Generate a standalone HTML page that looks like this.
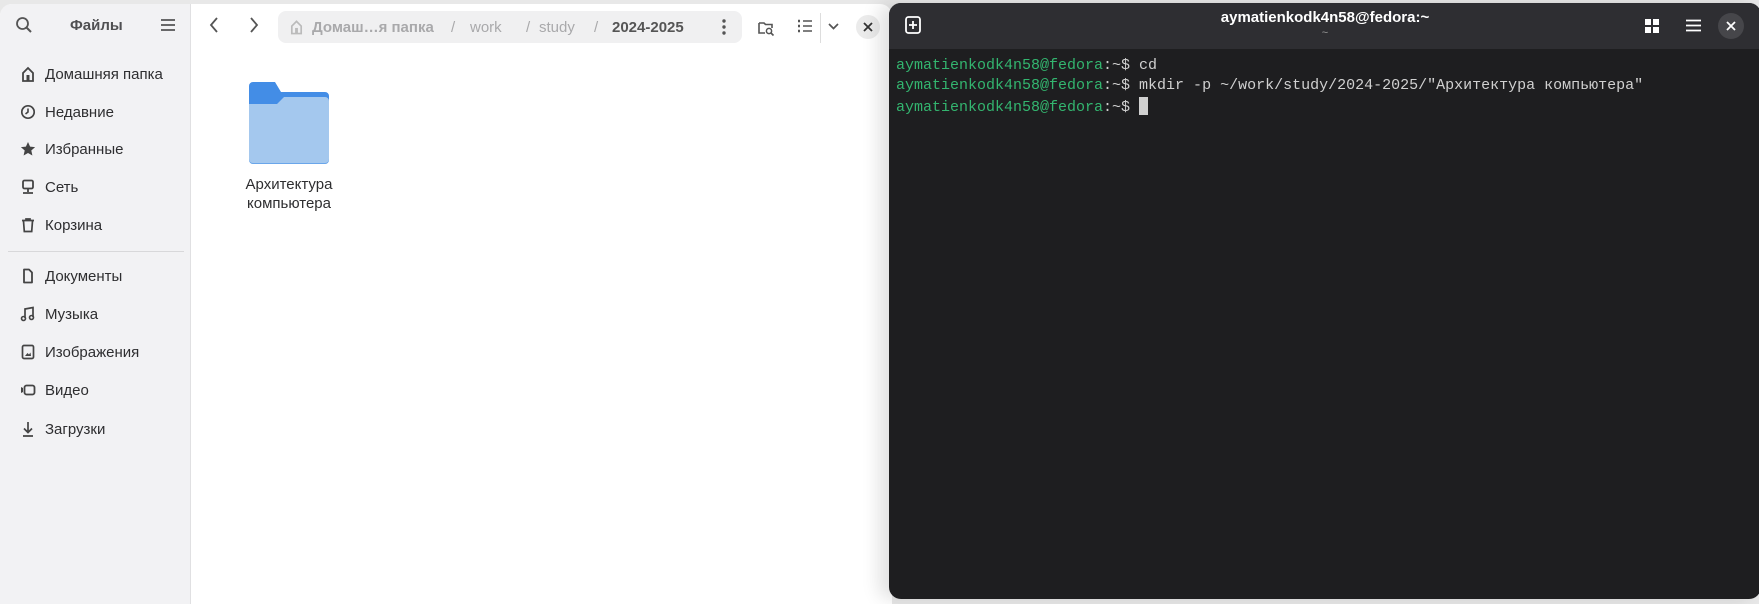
<!DOCTYPE html>
<html><head><meta charset="utf-8"><style>
*{margin:0;padding:0;box-sizing:border-box}
body{width:1759px;height:599px;overflow:hidden;background:#e8e8e8;font-family:"Liberation Sans","Noto Sans CJK SC",sans-serif;position:relative}
.files{position:absolute;left:0;top:4px;width:892px;height:600px;background:#fff;border-radius:12px 12px 0 0;overflow:hidden}
.side{position:absolute;left:0;top:0;width:191px;height:100%;background:#f2f2f4;border-right:1px solid #e0e0e2}
.item{position:absolute;left:0;height:24px;display:flex;align-items:center;font-size:15px;color:#2e2e30}
.item svg{position:absolute;left:20px}
.item span{position:absolute;left:45px;white-space:nowrap}
.sep{position:absolute;left:8px;width:176px;top:247px;border-top:1px solid #d8d8da}
.path{position:absolute;left:278px;top:7px;width:464px;height:32px;background:#f0f0f1;border-radius:8px;font-size:15px;color:#a9a9ab}
.path span{position:absolute;top:8px;white-space:nowrap}
.term{position:absolute;left:889px;top:3px;width:872px;height:596px;background:#1e1e20;border-radius:12px;overflow:hidden;box-shadow:-10px 0 18px rgba(0,0,0,.12)}
.th{position:absolute;left:0;top:0;width:100%;height:46px;background:#2e2e32}
.tl{position:absolute;left:7px;font-family:"Liberation Mono",monospace;font-size:15px;color:#d0d0d0;white-space:pre}
.g{color:#33b56f}
</style></head><body>
<div class="files">
 <div class="side">
  <svg style="position:absolute;left:15px;top:12px" width="18" height="18" viewBox="0 0 18 18"><circle cx="7.5" cy="7.5" r="5.5" fill="none" stroke="#555" stroke-width="1.8"/><path d="M11.5 11.5L16 16" stroke="#555" stroke-width="2"/></svg>
  <div style="position:absolute;left:70px;top:13px;font-size:15px;font-weight:bold;color:#505052">Файлы</div>
  <svg style="position:absolute;left:160px;top:14px" width="16" height="14"><path d="M1 2h14M1 7h14M1 12h14" stroke="#555" stroke-width="1.8"/></svg>
  <div class="item" style="top:58px"><svg width="16" height="16" viewBox="0 0 16 16"><path d="M3 15V7l5-5 5 5v8z" fill="none" stroke="#444" stroke-width="1.8"/><rect x="6.5" y="9" width="3" height="6" fill="#444"/></svg><span>Домашняя папка</span></div>
  <div class="item" style="top:96px"><svg width="16" height="16" viewBox="0 0 16 16"><circle cx="8" cy="8" r="6.2" fill="none" stroke="#444" stroke-width="1.7"/><path d="M8 4.5V8l-2.5 2" fill="none" stroke="#444" stroke-width="1.6"/></svg><span>Недавние</span></div>
  <div class="item" style="top:133px"><svg width="16" height="16" viewBox="0 0 16 16"><path d="M8 1l2.1 4.6 5 .5-3.8 3.4 1.1 5L8 12l-4.4 2.5 1.1-5L.9 6.1l5-.5z" fill="#444"/></svg><span>Избранные</span></div>
  <div class="item" style="top:171px"><svg width="16" height="16" viewBox="0 0 16 16"><rect x="3" y="1.5" width="10" height="8" rx="1.5" fill="none" stroke="#444" stroke-width="1.8"/><path d="M8 10v3M3 14h10" stroke="#444" stroke-width="1.8"/></svg><span>Сеть</span></div>
  <div class="item" style="top:209px"><svg width="16" height="16" viewBox="0 0 16 16"><path d="M2 3.5h12M6 3.5V2h4v1.5M3.5 4l.8 10.5h7.4L12.5 4" fill="none" stroke="#444" stroke-width="1.7"/></svg><span>Корзина</span></div>
  <div class="sep"></div>
  <div class="item" style="top:260px"><svg width="16" height="16" viewBox="0 0 16 16"><path d="M4 1.5h5l3 3V14.5H4z" fill="none" stroke="#444" stroke-width="1.8" stroke-linejoin="round"/></svg><span>Документы</span></div>
  <div class="item" style="top:298px"><svg width="16" height="16" viewBox="0 0 16 16"><path d="M5 12V3l8-1.5V11" fill="none" stroke="#444" stroke-width="1.7"/><circle cx="3.5" cy="12.5" r="2" fill="none" stroke="#444" stroke-width="1.6"/><circle cx="11.5" cy="11.5" r="2" fill="none" stroke="#444" stroke-width="1.6"/></svg><span>Музыка</span></div>
  <div class="item" style="top:336px"><svg width="16" height="16" viewBox="0 0 16 16"><rect x="2.5" y="1.5" width="11" height="13" rx="1.5" fill="none" stroke="#444" stroke-width="1.7"/><path d="M5 12l2.5-3 1.5 1.5 1.5-2L11 12z" fill="#444"/></svg><span>Изображения</span></div>
  <div class="item" style="top:374px"><svg width="16" height="16" viewBox="0 0 16 16"><path d="M1 5l2 1v4l-2 1z" fill="#444"/><rect x="4.5" y="3.5" width="10" height="9" rx="2" fill="none" stroke="#444" stroke-width="1.8"/></svg><span>Видео</span></div>
  <div class="item" style="top:413px"><svg width="16" height="16" viewBox="0 0 16 16"><path d="M8 1v10M4 7.5l4 4 4-4M3 15h10" fill="none" stroke="#444" stroke-width="1.7"/></svg><span>Загрузки</span></div>
 </div>
 <svg style="position:absolute;left:208px;top:12px" width="12" height="18"><path d="M9 2L3 9l6 7" fill="none" stroke="#555" stroke-width="1.8"/></svg>
 <svg style="position:absolute;left:248px;top:12px" width="12" height="18"><path d="M3 2l6 7-6 7" fill="none" stroke="#555" stroke-width="1.8"/></svg>
 <div class="path">
  <svg style="position:absolute;left:11px;top:8px" width="15" height="16" viewBox="0 0 16 16"><path d="M3 15V7l5-5 5 5v8z" fill="none" stroke="#bbb" stroke-width="1.8"/><rect x="6.5" y="9" width="3" height="6" fill="#bbb"/></svg>
  <span style="left:34px;font-weight:bold">Домаш…я папка</span>
  <span style="left:173px">/</span>
  <span style="left:192px">work</span>
  <span style="left:248px">/</span>
  <span style="left:261px">study</span>
  <span style="left:316px">/</span>
  <span style="left:334px;color:#555;font-weight:bold">2024-2025</span>
  <svg style="position:absolute;left:443px;top:8px" width="6" height="18"><circle cx="3" cy="2" r="1.7" fill="#555"/><circle cx="3" cy="8" r="1.7" fill="#555"/><circle cx="3" cy="14" r="1.7" fill="#555"/></svg>
 </div>
 <svg style="position:absolute;left:757px;top:15px" width="18" height="18" viewBox="0 0 18 18"><path d="M2 4h5l1.5 1.5H15V9M2 4v10h6" fill="none" stroke="#555" stroke-width="1.6"/><circle cx="12" cy="12" r="2.6" fill="none" stroke="#555" stroke-width="1.5"/><path d="M14 14l2.5 2.5" stroke="#555" stroke-width="1.6"/></svg>
 <svg style="position:absolute;left:797px;top:15px" width="16" height="16"><path d="M1 2h2M1 7h2M1 12h2" stroke="#555" stroke-width="2.5"/><path d="M6 2h9M6 7h9M6 12h9" stroke="#555" stroke-width="1.6"/></svg>
 <div style="position:absolute;left:820px;top:9px;height:30px;border-left:1px solid #ddd"></div>
 <svg style="position:absolute;left:828px;top:19px" width="11" height="8"><path d="M1 1l4.5 4.5L10 1" fill="none" stroke="#555" stroke-width="1.7"/></svg>
 <div style="position:absolute;left:856px;top:11px;width:24px;height:24px;border-radius:50%;background:#ebebeb"></div>
 <svg style="position:absolute;left:863px;top:18px" width="10" height="10"><path d="M1 1l8 8M9 1l-8 8" stroke="#333" stroke-width="1.8"/></svg>
 <svg style="position:absolute;left:249px;top:78px" width="80" height="82" viewBox="0 0 80 82"><path d="M4 0h22l6 10h44a4 4 0 0 1 4 4v62H0V4a4 4 0 0 1 4-4z" fill="#438de6"/><path d="M0 22h28l7-7h41a4 4 0 0 1 4 4v59a4 4 0 0 1-4 4H4a4 4 0 0 1-4-4z" fill="#a4c8ee"/><path d="M0 77a4 4 0 0 0 4 4h72a4 4 0 0 0 4-4v1a4 4 0 0 1-4 4H4a4 4 0 0 1-4-4z" fill="#6aa6ea"/></svg>
 <div style="position:absolute;left:229px;top:171px;width:120px;text-align:center;font-size:15px;line-height:19px;color:#2e2e30">Архитектура<br>компьютера</div>
</div>
<div class="term">
 <div class="th">
  <svg style="position:absolute;left:16px;top:13px" width="16" height="18"><rect x="1" y="1" width="14" height="16" rx="2.5" fill="none" stroke="#fff" stroke-width="1.8"/><path d="M8 5v8M4 9h8" stroke="#fff" stroke-width="1.8"/></svg>
  <div style="position:absolute;left:0;width:100%;top:6px;text-align:center;color:#fff;font-weight:bold;font-size:15px">aymatienkodk4n58@fedora:~</div>
  <div style="position:absolute;left:0;width:100%;top:24px;text-align:center;color:#999;font-size:11px">~</div>
  <svg style="position:absolute;left:756px;top:16px" width="14" height="14"><rect x="0" y="0" width="6" height="6" fill="#fff"/><rect x="8" y="0" width="6" height="6" fill="#fff"/><rect x="0" y="8" width="6" height="6" fill="#fff"/><rect x="8" y="8" width="6" height="6" fill="#fff"/></svg>
  <svg style="position:absolute;left:797px;top:16px" width="15" height="13"><path d="M0 1.5h15M0 6.5h15M0 11.5h15" stroke="#fff" stroke-width="1.8"/></svg>
  <div style="position:absolute;left:829px;top:10px;width:26px;height:26px;border-radius:50%;background:#46464a"></div>
  <svg style="position:absolute;left:837px;top:18px" width="10" height="10"><path d="M1 1l8 8M9 1l-8 8" stroke="#fff" stroke-width="1.8"/></svg>
 </div>
 <div class="tl" style="top:54px"><span class="g">aymatienkodk4n58@fedora</span>:~$ cd</div>
 <div class="tl" style="top:74px"><span class="g">aymatienkodk4n58@fedora</span>:~$ mkdir -p ~/work/study/2024-2025/"Архитектура компьютера"</div>
 <div class="tl" style="top:94px"><span class="g">aymatienkodk4n58@fedora</span>:~$ <span style="display:inline-block;width:9px;height:18px;background:#d0d0d0;vertical-align:-4px"></span></div>
</div>
</body></html>
